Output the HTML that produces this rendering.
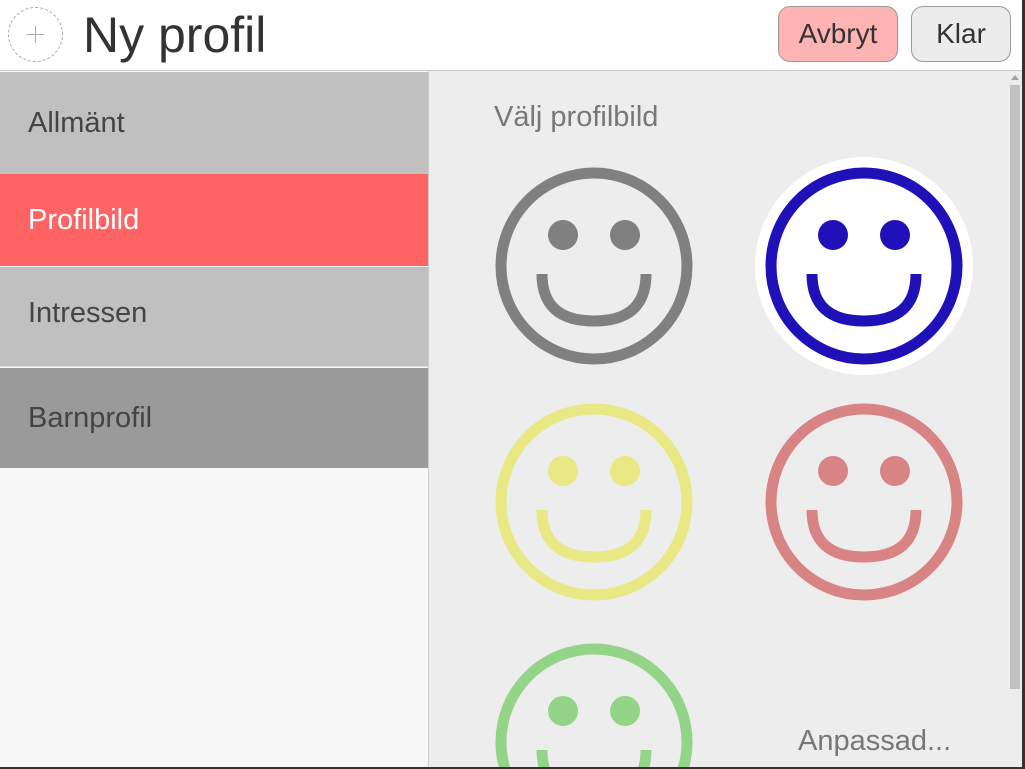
<!DOCTYPE html>
<html><head><style>
html,body{margin:0;width:1025px;height:769px;overflow:hidden}
body{font-family:"Liberation Sans",sans-serif;background:#fff;position:relative}
.hdr{position:absolute;left:0;top:0;width:1025px;height:70px;background:#fff;border-bottom:1px solid #ccc}
.plus{position:absolute;left:8px;top:7px;width:55px;height:55px;border:1px dashed #aaa;border-radius:50%;box-sizing:border-box}
.title{position:absolute;left:83px;top:6px;font-size:50px;color:#333}
.btn{position:absolute;top:6px;height:56px;border:1px solid #999;border-radius:12px;box-sizing:border-box;font-size:28px;color:#333;text-align:center;line-height:53px}
.side{position:absolute;left:0;top:71px;width:428px;height:696px;background:#f7f7f7;border-right:1px solid #ccc}
.it{position:absolute;left:0;width:428px;font-size:29px;color:#444;padding-left:28px;box-sizing:border-box}
.main{position:absolute;left:429px;top:71px;width:579px;height:696px;background:#ededed}
.sb{position:absolute;left:1008px;top:71px;width:14px;height:696px;background:#ededed}
</style></head><body>
<div class="hdr">
<div class="plus"><svg width="53" height="53" style="position:absolute;left:0;top:0"><path d="M26.5 18V35M18 26.5H35" stroke="#aaa" stroke-width="1"/></svg></div>
<div class="title">Ny profil</div>
<div class="btn" style="left:778px;width:120px;background:#ffb3b3">Avbryt</div>
<div class="btn" style="left:911px;width:100px;background:#ececec">Klar</div>
</div>
<div class="side">
<div class="it" style="top:1px;height:102px;line-height:102px;background:#c0c0c0">Allmänt</div>
<div class="it" style="top:103px;height:92px;line-height:92px;background:#ff6363;color:#fff">Profilbild</div>
<div class="it" style="top:196px;height:100px;line-height:92px;background:#c0c0c0;border-bottom:1px solid #e0e0e0">Intressen</div>
<div class="it" style="top:297px;height:100px;line-height:100px;background:#9a9a9a">Barnprofil</div>
</div>
<div class="main"></div>
<div class="sb"><div style="position:absolute;left:2px;top:14px;width:10px;height:604px;background:#c1c1c1"></div><div style="position:absolute;left:3px;top:4px;border:4px solid transparent;border-bottom:5px solid #a0a0a0;border-top:0"></div></div>
<div style="position:absolute;left:1022px;top:0;width:3px;height:769px;background:#333"></div>
<div style="position:absolute;left:0;top:767px;width:1025px;height:2px;background:#333"></div>
<div style="position:absolute;left:494px;top:101px;font-size:29px;color:#777">Välj profilbild</div>
<div style="position:absolute;left:798px;top:725px;font-size:29px;color:#777">Anpassad...</div>
<svg style="position:absolute;left:429px;top:71px" width="579" height="696">
<circle cx="435" cy="195" r="109" fill="#fff"/>
<g fill="none" stroke-width="11">
<g stroke="#808080"><circle cx="165" cy="195" r="93"/><path d="M113 203 Q113 250 165 250 Q217 250 217 203"/></g>
<g stroke="#2010b8"><circle cx="435" cy="195" r="93"/><path d="M383 203 Q383 250 435 250 Q487 250 487 203"/></g>
<g stroke="#e8e884"><circle cx="165" cy="431" r="93"/><path d="M113 439 Q113 486 165 486 Q217 486 217 439"/></g>
<g stroke="#d88484"><circle cx="435" cy="431" r="93"/><path d="M383 439 Q383 486 435 486 Q487 486 487 439"/></g>
<g stroke="#94d488"><circle cx="165" cy="671" r="93"/><path d="M113 679 Q113 726 165 726 Q217 726 217 679"/></g>
</g>
<g fill="#808080"><circle cx="134" cy="164" r="15"/><circle cx="196" cy="164" r="15"/></g>
<g fill="#2010b8"><circle cx="404" cy="164" r="15"/><circle cx="466" cy="164" r="15"/></g>
<g fill="#e8e884"><circle cx="134" cy="400" r="15"/><circle cx="196" cy="400" r="15"/></g>
<g fill="#d88484"><circle cx="404" cy="400" r="15"/><circle cx="466" cy="400" r="15"/></g>
<g fill="#94d488"><circle cx="134" cy="640" r="15"/><circle cx="196" cy="640" r="15"/></g>
</svg>
</body></html>
